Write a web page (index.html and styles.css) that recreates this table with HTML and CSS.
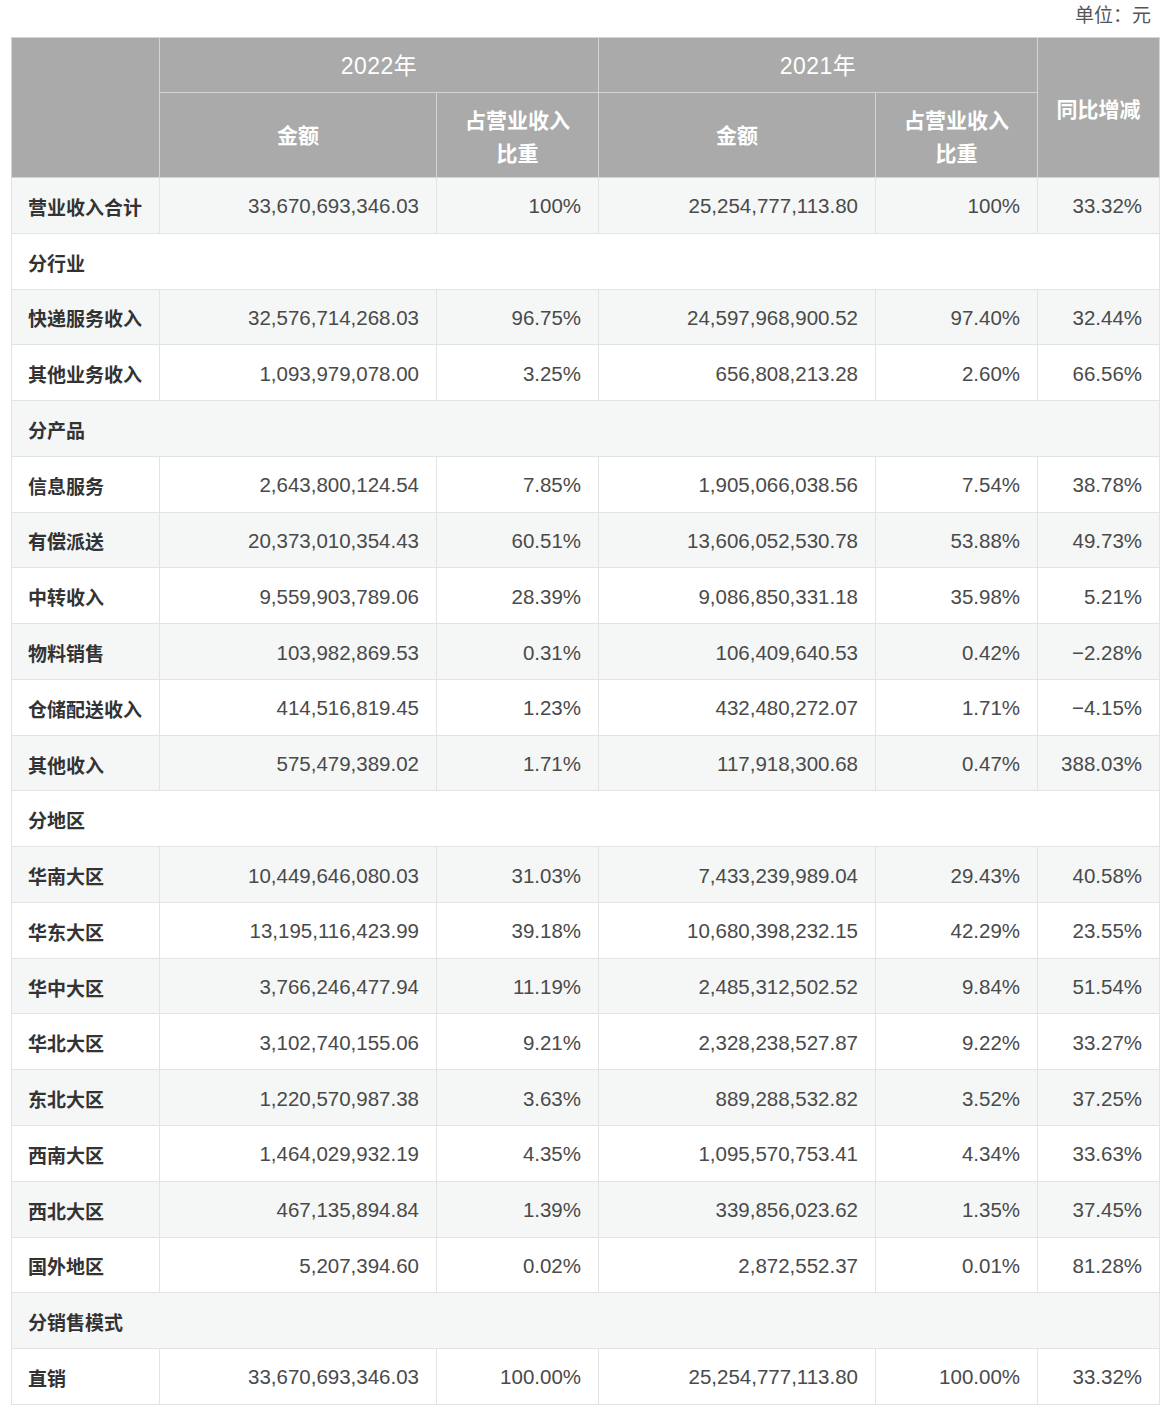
FILE: index.html
```html
<!DOCTYPE html>
<html lang="zh">
<head>
<meta charset="utf-8">
<title>营业收入构成</title>
<link rel="stylesheet" href="styles.css">
</head>
<body>
<div class="unit">单位：元</div>
<table class="rev">
  <colgroup>
    <col class="c1"><col class="c2"><col class="c3"><col class="c4"><col class="c5"><col class="c6">
  </colgroup>
  <thead>
    <tr class="h1">
      <th rowspan="2"></th>
      <th colspan="2" class="yr">2022年</th>
      <th colspan="2" class="yr">2021年</th>
      <th rowspan="2" class="chg">同比增减</th>
    </tr>
    <tr class="h2">
      <th>金额</th>
      <th class="two">占营业收入<br>比重</th>
      <th>金额</th>
      <th class="two">占营业收入<br>比重</th>
    </tr>
  </thead>
  <tbody>
    <tr><td class="lb">营业收入合计</td><td>33,670,693,346.03</td><td>100%</td><td>25,254,777,113.80</td><td>100%</td><td>33.32%</td></tr>
    <tr class="sec"><td colspan="6">分行业</td></tr>
    <tr><td class="lb">快递服务收入</td><td>32,576,714,268.03</td><td>96.75%</td><td>24,597,968,900.52</td><td>97.40%</td><td>32.44%</td></tr>
    <tr><td class="lb">其他业务收入</td><td>1,093,979,078.00</td><td>3.25%</td><td>656,808,213.28</td><td>2.60%</td><td>66.56%</td></tr>
    <tr class="sec"><td colspan="6">分产品</td></tr>
    <tr><td class="lb">信息服务</td><td>2,643,800,124.54</td><td>7.85%</td><td>1,905,066,038.56</td><td>7.54%</td><td>38.78%</td></tr>
    <tr><td class="lb">有偿派送</td><td>20,373,010,354.43</td><td>60.51%</td><td>13,606,052,530.78</td><td>53.88%</td><td>49.73%</td></tr>
    <tr><td class="lb">中转收入</td><td>9,559,903,789.06</td><td>28.39%</td><td>9,086,850,331.18</td><td>35.98%</td><td>5.21%</td></tr>
    <tr><td class="lb">物料销售</td><td>103,982,869.53</td><td>0.31%</td><td>106,409,640.53</td><td>0.42%</td><td>−2.28%</td></tr>
    <tr><td class="lb">仓储配送收入</td><td>414,516,819.45</td><td>1.23%</td><td>432,480,272.07</td><td>1.71%</td><td>−4.15%</td></tr>
    <tr><td class="lb">其他收入</td><td>575,479,389.02</td><td>1.71%</td><td>117,918,300.68</td><td>0.47%</td><td>388.03%</td></tr>
    <tr class="sec"><td colspan="6">分地区</td></tr>
    <tr><td class="lb">华南大区</td><td>10,449,646,080.03</td><td>31.03%</td><td>7,433,239,989.04</td><td>29.43%</td><td>40.58%</td></tr>
    <tr><td class="lb">华东大区</td><td>13,195,116,423.99</td><td>39.18%</td><td>10,680,398,232.15</td><td>42.29%</td><td>23.55%</td></tr>
    <tr><td class="lb">华中大区</td><td>3,766,246,477.94</td><td>11.19%</td><td>2,485,312,502.52</td><td>9.84%</td><td>51.54%</td></tr>
    <tr><td class="lb">华北大区</td><td>3,102,740,155.06</td><td>9.21%</td><td>2,328,238,527.87</td><td>9.22%</td><td>33.27%</td></tr>
    <tr><td class="lb">东北大区</td><td>1,220,570,987.38</td><td>3.63%</td><td>889,288,532.82</td><td>3.52%</td><td>37.25%</td></tr>
    <tr><td class="lb">西南大区</td><td>1,464,029,932.19</td><td>4.35%</td><td>1,095,570,753.41</td><td>4.34%</td><td>33.63%</td></tr>
    <tr><td class="lb">西北大区</td><td>467,135,894.84</td><td>1.39%</td><td>339,856,023.62</td><td>1.35%</td><td>37.45%</td></tr>
    <tr><td class="lb">国外地区</td><td>5,207,394.60</td><td>0.02%</td><td>2,872,552.37</td><td>0.01%</td><td>81.28%</td></tr>
    <tr class="sec"><td colspan="6">分销售模式</td></tr>
    <tr><td class="lb">直销</td><td>33,670,693,346.03</td><td>100.00%</td><td>25,254,777,113.80</td><td>100.00%</td><td>33.32%</td></tr>
  </tbody>
</table>
</body>
</html>
```

FILE: styles.css
```css
html, body {
  margin: 0;
  padding: 0;
  background: #ffffff;
}
body {
  font-family: "Liberation Sans", "Noto Sans CJK SC", Arial, sans-serif;
  color: #444;
}
.unit {
  width: 1151px;
  text-align: right;
  font-size: 19px;
  line-height: 32px;
  height: 37px;
  color: #555;
}
.rev {
  margin-left: 11px;
  width: 1148px;
  border-collapse: collapse;
  table-layout: fixed;
}
.c1 { width: 148px; }
.c2 { width: 277px; }
.c3 { width: 162px; }
.c4 { width: 277px; }
.c5 { width: 162px; }
.c6 { width: 122px; }

.rev th {
  background: #a9aaa9;
  color: #ffffff;
  font-weight: bold;
  font-size: 21px;
  line-height: 33px;
  border: 1px solid #d4d4d4;
  text-align: center;
  vertical-align: middle;
  padding: 0 6px;
}
.rev th.yr {
  font-weight: normal;
  font-size: 23px;
  letter-spacing: 0.5px;
  padding-top: 2px;
}
.rev th.two,
.rev th.chg {
  padding-top: 4px;
}
.rev tr.h1 { height: 55px; }
.rev tr.h2 { height: 85px; }

.rev td {
  border: 1px solid #e2e4e4;
  font-size: 20.5px;
  color: #4a4a4a;
  text-align: right;
  padding: 2px 17px 0 16px;
  white-space: nowrap;
  vertical-align: middle;
}
.rev tbody tr { height: 55.77px; }
.rev tbody tr:nth-child(odd) { background: #f5f7f7; }
.rev tbody tr:nth-child(even) { background: #ffffff; }

.rev td.lb,
.rev tr.sec td {
  text-align: left;
  font-weight: bold;
  color: #333;
  font-size: 19px;
}
```
